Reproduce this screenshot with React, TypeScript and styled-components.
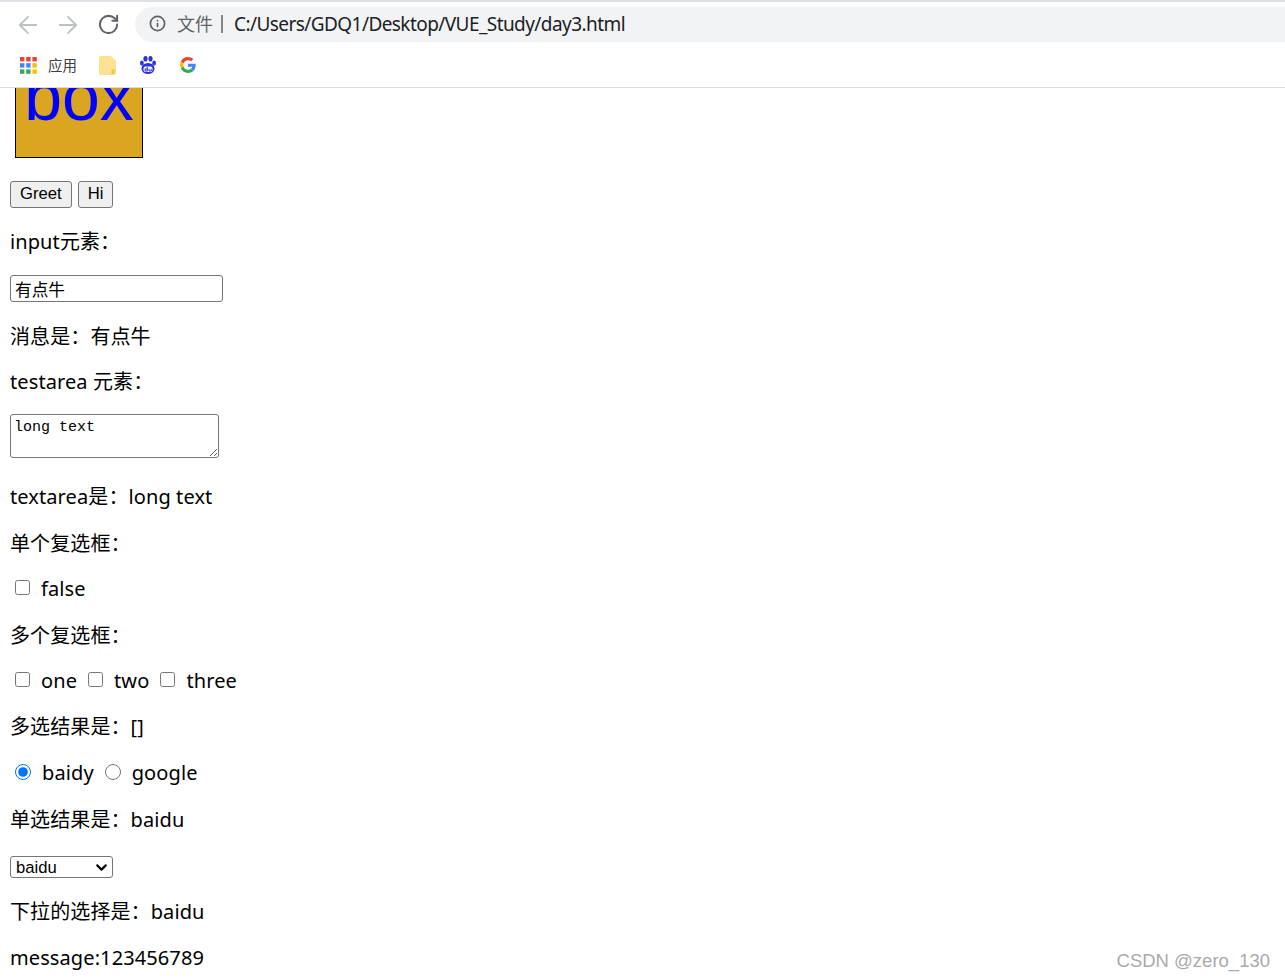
import React from 'react';
import styled, { createGlobalStyle } from 'styled-components';
import { ArrowLeft, ArrowRight, RotateCw, Info, ChevronDown } from 'lucide-react';

const Global = createGlobalStyle`
  html, body { margin: 0; padding: 0; background: #fff; }
  body { font-family: "Noto Sans", "Noto Sans CJK SC", sans-serif; overflow: hidden; }
`;
const Window = styled.div`
  position: relative; width: 1285px; height: 978px; overflow: hidden; background: #fff;
  display: flex; flex-direction: column;
`;
const Chrome = styled.header`
  flex: none; height: 88px; box-sizing: border-box; border-top: 2px solid #dee1e6;
  border-bottom: 1px solid #dadce0; display: flex; flex-direction: column; background: #fff;
`;
const Toolbar = styled.div`
  height: 40px; flex: none; box-sizing: border-box; padding: 5px 0 0 14px; display: flex; align-items: center;
`;
const NavButton = styled.span<{ $on?: boolean }>`
  width: 28px; height: 35px; margin-right: 12px; display: flex; align-items: center; justify-content: center;
  color: ${p => (p.$on ? '#5f6368' : '#bdc1c6')};
`;
const Omnibox = styled.div`
  flex: 1; height: 35px; box-sizing: border-box; margin-left: 1px; border-radius: 18px 0 0 18px; background: #f1f3f4;
  display: flex; align-items: center; padding: 0 0 2px 14px; font-size: 20px; color: #202124; white-space: nowrap;
`;
const Scheme = styled.span`
  margin: 0 0 2px 11px; color: #5f6368; font-size: 18px; font-family: "Noto Sans CJK SC", sans-serif;
`;
const Divider = styled.span`
  width: 2px; height: 18px; margin: 0 11px 0 8px; background: #80868b;
`;
const Url = styled.span`font-size: 19px; letter-spacing: -0.57px;`;
const Bookmarks = styled.nav`
  flex: 1; display: flex; align-items: center; padding-left: 20px; margin-top: 1px;
`;
const BookLabel = styled.span`
  margin: 0 22px 2px 11px; font-size: 14.5px; color: #3c4043; font-family: "Noto Sans CJK SC", sans-serif;
`;
const BookIcon = styled.svg`flex: none; display: block; margin-right: 24px;`;
const Page = styled.main`
  flex: 1; min-height: 0; padding-left: 10px; display: flex; flex-direction: column; align-items: flex-start;
  color: #000; font-size: 20px; line-height: 26px; letter-spacing: 0.1px;
  & > * { flex: none; }
`;
const Box = styled.div`
  width: 128px; height: 70px; margin-left: 5px; box-sizing: border-box;
  border: 1px solid #000; border-top: 0; background: goldenrod; color: #00f; overflow: hidden;
  font: 68px/68px "Liberation Sans", sans-serif; text-align: center; letter-spacing: 0;
`;
const BoxText = styled.div`margin-top: -26px;`;
const Buttons = styled.div`display: flex; gap: 6px; margin-top: 23px; margin-bottom: 21px;`;
const Btn = styled.button`
  height: 27px; padding: 0 9px 2px; box-sizing: border-box; font: 16.67px "Liberation Sans", sans-serif;
  background: #efefef; border: 1px solid #767676; border-radius: 3px; color: #000;
`;
const Line = styled.p<{ $after?: number; $cjk?: boolean }>`
  margin: 0 0 ${p => p.$after ?? 20}px; height: 26px; box-sizing: border-box; white-space: pre;
  display: flex; align-items: center; padding-top: ${p => (p.$cjk ? 2 : 0)}px;
`;
const TextInput = styled.input`
  width: 213px; height: 27px; box-sizing: border-box; margin: 0 0 21px; padding: 0 4px;
  border: 1px solid #767676; border-radius: 3px; font: 16.67px "Noto Sans CJK SC", sans-serif; color: #000; outline: none;
`;
const Area = styled.textarea`
  display: block; width: 209px; height: 44px; box-sizing: border-box; margin: 0 0 26px; padding: 4px 3px;
  border: 1px solid #767676; border-radius: 3px; font: 15px/18px "Liberation Mono", monospace; color: #000;
`;
const Check = styled.input`
  width: 15px; height: 15px; margin: 0 5px 3px 5px; flex: none;
`;
const Radio = styled.input`
  width: 16px; height: 16px; margin: 0 5px 3px 5px; flex: none;
`;
const Label = styled.span`margin: 0 6px 0 6px;`;
const SelectWrap = styled.div`
  position: relative; width: 103px; height: 22px; margin: 4px 0 21px;
`;
const Dropdown = styled.select`
  appearance: none; display: block; width: 100%; height: 100%; margin: 0; box-sizing: border-box; padding: 0 0 0 5px;
  border: 1px solid #767676; border-radius: 3px; background: #fff; color: #000;
  font: 16.67px "Liberation Sans", sans-serif;
`;
const Arrow = styled.span`
  position: absolute; right: 3px; top: 3px; display: flex; color: #000; pointer-events: none;
`;
const Watermark = styled.div`
  position: absolute; right: 15px; bottom: 6px; font: 18.5px "Liberation Sans", sans-serif; color: #aaa;
`;

const Apps = () => {
  const colors = ['#ea4335', '#ea4335', '#ea4335', '#4285f4', '#4285f4', '#fbbc04', '#34a853', '#34a853', '#fbbc04'];
  return (
    <svg width="17" height="17" viewBox="0 0 17 17" style={{ flex: 'none' }}>
      {colors.map((c, i) => (
        <rect key={i} x={(i % 3) * 6.2} y={Math.floor(i / 3) * 6.2} width="4.4" height="4.4" fill={c} />
      ))}
    </svg>
  );
};

export default function App() {
  return (
    <Window>
      <Global />
      <Chrome>
        <Toolbar>
          <NavButton><ArrowLeft size={28} strokeWidth={1.6} /></NavButton>
          <NavButton><ArrowRight size={28} strokeWidth={1.6} /></NavButton>
          <NavButton $on><RotateCw size={23} strokeWidth={2.1} /></NavButton>
          <Omnibox>
            <Info size={17} strokeWidth={2.4} color="#5f6368" />
            <Scheme>文件</Scheme>
            <Divider />
            <Url>C:/Users/GDQ1/Desktop/VUE_Study/day3.html</Url>
          </Omnibox>
        </Toolbar>
        <Bookmarks>
          <Apps />
          <BookLabel>应用</BookLabel>
          <BookIcon width="17" height="19" viewBox="0 0 17 19">
            <path d="M2 .5h10l4.500 4.500v12a1.500 1.500 0 0 1-1.500 1.500H2A1.500 1.500 0 0 1 .5 17V2A1.500 1.500 0 0 1 2 .5z" fill="#fde293" stroke="#fbe08a" />
            <rect x="12.500" y="13" width="3" height="5" rx="1" fill="#f5c542" />
          </BookIcon>
          <BookIcon width="16" height="18" viewBox="0 0 16 18">
            <g fill="#2932e1">
              <ellipse cx="8" cy="12.500" rx="6.500" ry="5.500" />
              <ellipse cx="5.500" cy="2.800" rx="2.100" ry="2.800" />
              <ellipse cx="10.500" cy="2.800" rx="2.100" ry="2.800" />
              <ellipse cx="1.900" cy="7" rx="1.900" ry="2.500" />
              <ellipse cx="14.100" cy="7" rx="1.900" ry="2.500" />
            </g>
            <rect x="3.500" y="10.500" width="9" height="5.500" rx="2" fill="#fff" />
            <path d="M7.300 11v4.200M7.300 15H5.100v-2.200h2.200M9 12.800V15h2.200v-2.200" fill="none" stroke="#2932e1" strokeWidth="1" />
          </BookIcon>
          <BookIcon width="16" height="16" viewBox="0 0 48 48">
            <path fill="#ea4335" d="M24 9.500c3.500 0 6.700 1.200 9.200 3.600l6.900-6.900C35.900 2.400 30.500 0 24 0 14.600 0 6.500 5.400 2.600 13.200l8 6.200C12.500 13.600 17.800 9.500 24 9.500z" />
            <path fill="#4285f4" d="M47 24.500c0-1.600-.1-3.100-.4-4.500H24v9h12.900c-.6 3-2.200 5.500-4.700 7.200l7.700 6c4.500-4.200 7.100-10.300 7.100-17.700z" />
            <path fill="#fbbc05" d="M10.600 28.600c-.5-1.400-.8-3-.8-4.600s.3-3.200.8-4.600l-8-6.200C.9 16.500 0 20.100 0 24s.9 7.500 2.600 10.800l8-6.200z" />
            <path fill="#34a853" d="M24 48c6.500 0 11.900-2.100 15.900-5.800l-7.700-6c-2.200 1.400-4.900 2.300-8.200 2.300-6.200 0-11.500-4.100-13.400-9.900l-8 6.200C6.500 42.600 14.600 48 24 48z" />
          </BookIcon>
        </Bookmarks>
      </Chrome>
      <Page>
        <Box><BoxText>box</BoxText></Box>
        <Buttons><Btn>Greet</Btn><Btn>Hi</Btn></Buttons>
        <Line>input元素：</Line>
        <TextInput defaultValue="有点牛" />
        <Line $cjk>消息是：有点牛</Line>
        <Line $after={19}>testarea 元素：</Line>
        <Area defaultValue="long text" />
        <Line>textarea是：long text</Line>
        <Line $cjk>单个复选框：</Line>
        <Line><Check type="checkbox" /><Label>false</Label></Line>
        <Line $cjk>多个复选框：</Line>
        <Line>
          <Check type="checkbox" /><Label>one</Label>
          <Check type="checkbox" /><Label>two</Label>
          <Check type="checkbox" /><Label>three</Label>
        </Line>
        <Line>多选结果是：[]</Line>
        <Line>
          <Radio type="radio" name="r" defaultChecked /><Label>baidy</Label>
          <Radio type="radio" name="r" /><Label>google</Label>
        </Line>
        <Line $cjk>单选结果是：baidu</Line>
        <SelectWrap>
          <Dropdown defaultValue="baidu"><option>baidu</option></Dropdown>
          <Arrow><ChevronDown size={17} strokeWidth={3} /></Arrow>
        </SelectWrap>
        <Line>下拉的选择是：baidu</Line>
        <Line>message:123456789</Line>
      </Page>
      <Watermark>CSDN @zero_130</Watermark>
    </Window>
  );
}
